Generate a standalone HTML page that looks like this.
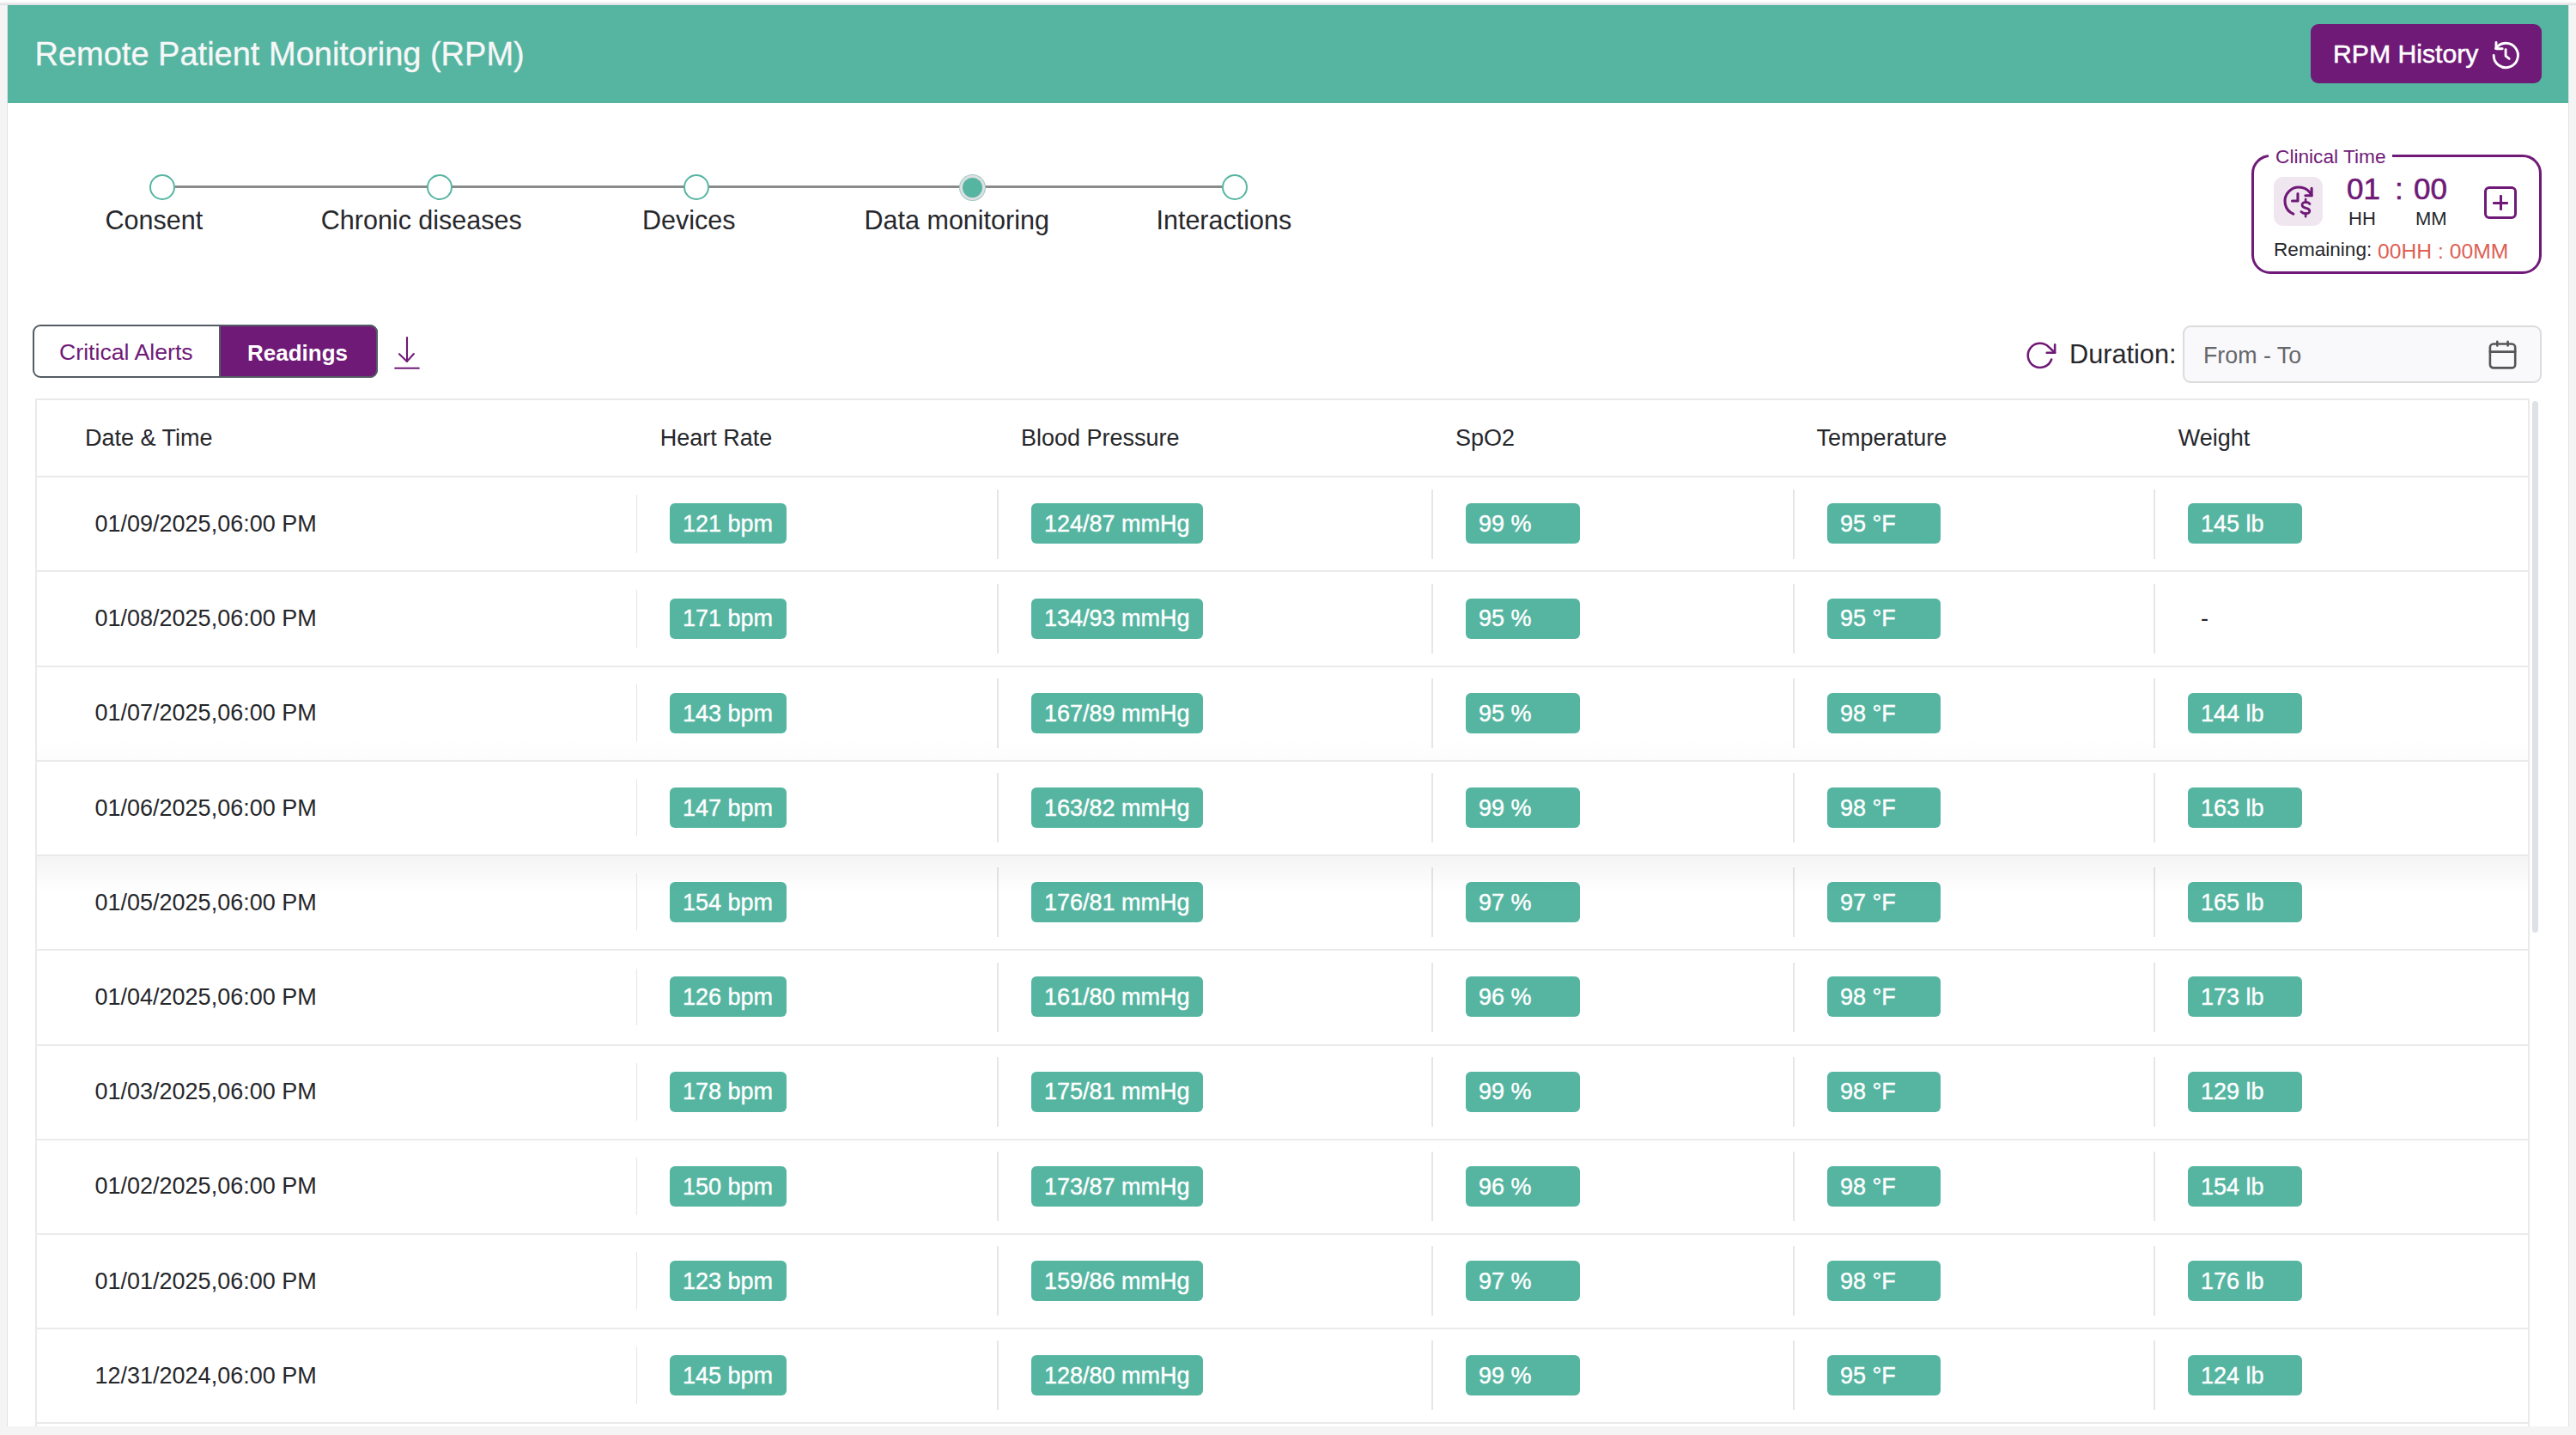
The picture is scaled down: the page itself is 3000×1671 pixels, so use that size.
<!DOCTYPE html><html><head><meta charset="utf-8"><style>
html,body{margin:0;padding:0;}
body{width:3000px;height:1671px;position:relative;overflow:hidden;background:#f4f4f4;font-family:"Liberation Sans",sans-serif;}
.t{position:absolute;white-space:pre;line-height:normal;}
.r{position:absolute;box-sizing:border-box;}
svg{position:absolute;overflow:visible;}
</style></head><body>
<div class="r" style="left:0px;top:0px;width:3000px;height:2px;background:#fff"></div>
<div class="r" style="left:0px;top:4px;width:3000px;height:2px;background:#e2e2e8"></div>
<div class="r" style="left:8px;top:6px;width:2984px;height:1655px;background:#dfe0e6"></div>
<div class="r" style="left:9px;top:6px;width:2982px;height:1655px;background:#fff"></div>
<div class="r" style="left:9px;top:6px;width:2982px;height:114px;background:#55b5a1"></div>
<div class="r" style="left:9px;top:6px;width:2982px;height:1px;background:#4bb39b"></div>
<div class="t" style="left:40.5px;top:41.8px;font-size:38px;color:#f7f7f8;font-weight:400;-webkit-text-stroke:0.3px #f7f7f8">Remote Patient Monitoring (RPM)</div>
<div class="r" style="left:2691px;top:28px;width:269px;height:69px;background:#6f1a77;border-radius:9px"></div>
<div class="t" style="left:2717.0px;top:45.7px;font-size:30.2px;color:#ffffff;font-weight:400;-webkit-text-stroke:0.5px #fff">RPM History</div>
<svg style="left:2895px;top:42px" width="50" height="46" viewBox="0 0 50 46" fill="none" stroke="#fff" stroke-width="2.9" stroke-linecap="round" stroke-linejoin="round"><path d="M9.15 22.45 A14.15 14.15 0 1 0 11.57 14.54"/><path d="M12 7.4 V14.8 H19.2"/><path d="M23.1 15.7 V23.1 L27.2 26.3"/></svg>
<div class="r" style="left:204px;top:216.2px;width:1219px;height:2.6px;background:#8a8a8a"></div>
<div class="r" style="left:174.0px;top:203px;width:30px;height:30px;border-radius:50%;background:#fff;border:2px solid #55b5a1;"></div>
<div class="r" style="left:496.7px;top:203px;width:30px;height:30px;border-radius:50%;background:#fff;border:2px solid #55b5a1;"></div>
<div class="r" style="left:796.0px;top:203px;width:30px;height:30px;border-radius:50%;background:#fff;border:2px solid #55b5a1;"></div>
<div class="r" style="left:1117px;top:203px;width:31px;height:31px;border-radius:50%;background:#dfdfe3;border:1px solid rgba(85,181,161,0.45)"></div>
<div class="r" style="left:1121px;top:207px;width:23px;height:23px;border-radius:50%;background:#55b5a1;"></div>
<div class="r" style="left:1423.0px;top:203px;width:30px;height:30px;border-radius:50%;background:#fff;border:2px solid #55b5a1;"></div>
<div class="t" style="left:122.5px;top:239.2px;font-size:30.5px;color:#26272b;font-weight:400;">Consent</div>
<div class="t" style="left:373.8px;top:239.2px;font-size:30.5px;color:#26272b;font-weight:400;">Chronic diseases</div>
<div class="t" style="left:748.0px;top:239.2px;font-size:30.5px;color:#26272b;font-weight:400;">Devices</div>
<div class="t" style="left:1006.6px;top:239.2px;font-size:30.5px;color:#26272b;font-weight:400;">Data monitoring</div>
<div class="t" style="left:1346.5px;top:239.2px;font-size:30.5px;color:#26272b;font-weight:400;">Interactions</div>
<div class="r" style="left:2622px;top:180px;width:338px;height:139px;border:3px solid #6f1a77;border-radius:22px"></div>
<div class="r" style="left:2642px;top:176px;width:144px;height:10px;background:#fff"></div>
<div class="t" style="left:2650.0px;top:169.3px;font-size:22.7px;color:#6f1a77;font-weight:400;">Clinical Time</div>
<div class="r" style="left:2648px;top:206px;width:57px;height:57px;background:#f0e6f0;border-radius:11px"></div>
<svg style="left:2645px;top:203px" width="65" height="65" viewBox="0 0 65 65" fill="none" stroke="#6f1a77" stroke-width="3.1" stroke-linecap="round" stroke-linejoin="round"><path d="M25.8 46.2 A16.25 16.25 0 1 1 47.1 24.7"/><path d="M47.1 16.3 V24.7 H39.9"/><path d="M31 22.6 V31 H24.5"/><path stroke-width="2.7" d="M45 34.6 C44 32.6 41.5 32.3 40 32.3 C37.2 32.4 35.8 34 36 36 C36.3 38.6 39.8 39.1 41.5 39.6 C44 40.3 45 41.6 44.8 43.2 C44.5 45.4 41.8 45.8 40 45.7 C38 45.6 36.1 44.8 34.9 43.5"/><path stroke-width="2.7" d="M40.1 29.2 V32.3 M40.1 45.7 V49.2"/></svg>
<div class="t" style="left:2733.0px;top:199.7px;font-size:35px;color:#6f1a77;font-weight:400;-webkit-text-stroke:0.6px #6f1a77">01</div>
<div class="t" style="left:2789.0px;top:199.7px;font-size:35px;color:#6f1a77;font-weight:400;-webkit-text-stroke:0.6px #6f1a77">:</div>
<div class="t" style="left:2811.0px;top:199.7px;font-size:35px;color:#6f1a77;font-weight:400;-webkit-text-stroke:0.6px #6f1a77">00</div>
<div class="t" style="left:2735.0px;top:241.8px;font-size:22px;color:#26272b;font-weight:400;">HH</div>
<div class="t" style="left:2813.0px;top:241.8px;font-size:22px;color:#26272b;font-weight:400;">MM</div>
<div class="r" style="left:2893px;top:217px;width:38px;height:38px;border:3px solid #6f1a77;border-radius:6px"></div>
<div class="r" style="left:2903px;top:234.5px;width:18px;height:3.0px;background:#6f1a77;border-radius:1px"></div>
<div class="r" style="left:2910.5px;top:227px;width:3.0px;height:18px;background:#6f1a77;border-radius:1px"></div>
<div class="t" style="left:2648.0px;top:277.5px;font-size:22.6px;color:#26272b;font-weight:400;">Remaining:</div>
<div class="t" style="left:2769.0px;top:278.6px;font-size:24.7px;color:#de5f55;font-weight:400;">00HH : 00MM</div>
<div class="r" style="left:38px;top:378px;width:402px;height:62px;border:2px solid #545b63;border-radius:9px;background:#fff"></div>
<div class="r" style="left:255px;top:378px;width:185px;height:62px;background:#6f1a77;border:2px solid #545b63;border-left-width:2px;border-radius:0 9px 9px 0"></div>
<div class="t" style="left:69.0px;top:395.4px;font-size:26.7px;color:#6f1a77;font-weight:400;">Critical Alerts</div>
<div class="t" style="left:288.0px;top:396.1px;font-size:26px;color:#ffffff;font-weight:700;">Readings</div>
<svg style="left:459px;top:392px" width="31" height="40" viewBox="0 0 31 40" fill="none" stroke="#6f1a77" stroke-width="2.1" stroke-linecap="round" stroke-linejoin="round"><path d="M15 1 V28.5"/><path d="M6 20.2 L15 28.9 L22.9 20"/><path d="M1.2 36.8 H28.8"/></svg>
<svg style="left:2357.3px;top:395.1px" width="37.7" height="37.7" viewBox="0 0 24 24" fill="none" stroke="#6f1a77" stroke-width="1.65" stroke-linecap="round" stroke-linejoin="round"><path d="M23 4v6h-6"/><path d="M20.49 15a9 9 0 1 1-2.12-9.36L23 10"/></svg>
<div class="t" style="left:2410.0px;top:395.0px;font-size:30.7px;color:#26272b;font-weight:400;">Duration:</div>
<div class="r" style="left:2542px;top:379px;width:418px;height:67px;border:2px solid #dcdcdc;border-radius:9px;background:#f9f9fb"></div>
<div class="t" style="left:2566.0px;top:398.5px;font-size:26.8px;color:#66676b;font-weight:400;">From - To</div>
<svg style="left:2898px;top:395px" width="35" height="36" viewBox="0 0 35 36" fill="none" stroke="#555" stroke-width="2.6" stroke-linecap="round" stroke-linejoin="round"><rect x="1.9" y="5.5" width="29.3" height="27.9" rx="4"/><path d="M1.9 14.6 H31.2"/><path d="M10.3 2.7 V7.4 M22.6 2.7 V7.4"/></svg>
<div class="r" style="left:41px;top:464px;width:2905px;height:1197px;border-left:2px solid #eaeaea;border-right:2px solid #eaeaea;border-top:2px solid #eaeaea"></div>
<div class="t" style="left:99.0px;top:495.2px;font-size:27px;color:#26272b;font-weight:400;">Date &amp; Time</div>
<div class="t" style="left:768.8px;top:495.2px;font-size:27px;color:#26272b;font-weight:400;">Heart Rate</div>
<div class="t" style="left:1188.9px;top:495.2px;font-size:27px;color:#26272b;font-weight:400;">Blood Pressure</div>
<div class="t" style="left:1695.0px;top:495.2px;font-size:27px;color:#26272b;font-weight:400;">SpO2</div>
<div class="t" style="left:2115.6px;top:495.2px;font-size:27px;color:#26272b;font-weight:400;">Temperature</div>
<div class="t" style="left:2536.7px;top:495.2px;font-size:27px;color:#26272b;font-weight:400;">Weight</div>
<div class="r" style="left:41px;top:554px;width:2903px;height:2px;background:#eaeaea"></div>
<div class="r" style="left:41px;top:664px;width:2903px;height:2px;background:#eaeaea"></div>
<div class="t" style="left:110.5px;top:595.0px;font-size:27px;color:#26272b;font-weight:400;">01/09/2025,06:00 PM</div>
<div class="r" style="left:741px;top:576px;width:1px;height:68px;background:#e6e6e6"></div>
<div class="r" style="left:1161px;top:570px;width:2px;height:81px;background:#e6e6e6"></div>
<div class="r" style="left:1667px;top:570px;width:2px;height:81px;background:#e6e6e6"></div>
<div class="r" style="left:2088px;top:570px;width:2px;height:81px;background:#e6e6e6"></div>
<div class="r" style="left:2508px;top:570px;width:2px;height:81px;background:#e6e6e6"></div>
<div class="r" style="left:780px;top:586px;width:136px;height:47px;background:#55b5a1;border-radius:6px"></div>
<div class="t" style="left:795.0px;top:595.1px;font-size:27px;color:#fff;font-weight:400;-webkit-text-stroke:0.4px #fff">121 bpm</div>
<div class="r" style="left:1201px;top:586px;width:200px;height:47px;background:#55b5a1;border-radius:6px"></div>
<div class="t" style="left:1216.0px;top:595.1px;font-size:27px;color:#fff;font-weight:400;-webkit-text-stroke:0.4px #fff">124/87 mmHg</div>
<div class="r" style="left:1707px;top:586px;width:133px;height:47px;background:#55b5a1;border-radius:6px"></div>
<div class="t" style="left:1722.0px;top:595.1px;font-size:27px;color:#fff;font-weight:400;-webkit-text-stroke:0.4px #fff">99 %</div>
<div class="r" style="left:2128px;top:586px;width:132px;height:47px;background:#55b5a1;border-radius:6px"></div>
<div class="t" style="left:2143.0px;top:595.1px;font-size:27px;color:#fff;font-weight:400;-webkit-text-stroke:0.4px #fff">95 °F</div>
<div class="r" style="left:2548px;top:586px;width:133px;height:47px;background:#55b5a1;border-radius:6px"></div>
<div class="t" style="left:2563.0px;top:595.1px;font-size:27px;color:#fff;font-weight:400;-webkit-text-stroke:0.4px #fff">145 lb</div>
<div class="r" style="left:41px;top:775px;width:2903px;height:2px;background:#eaeaea"></div>
<div class="t" style="left:110.5px;top:705.2px;font-size:27px;color:#26272b;font-weight:400;">01/08/2025,06:00 PM</div>
<div class="r" style="left:741px;top:687px;width:1px;height:67px;background:#e6e6e6"></div>
<div class="r" style="left:1161px;top:680px;width:2px;height:81px;background:#e6e6e6"></div>
<div class="r" style="left:1667px;top:680px;width:2px;height:81px;background:#e6e6e6"></div>
<div class="r" style="left:2088px;top:680px;width:2px;height:81px;background:#e6e6e6"></div>
<div class="r" style="left:2508px;top:680px;width:2px;height:81px;background:#e6e6e6"></div>
<div class="r" style="left:780px;top:697px;width:136px;height:47px;background:#55b5a1;border-radius:6px"></div>
<div class="t" style="left:795.0px;top:705.3px;font-size:27px;color:#fff;font-weight:400;-webkit-text-stroke:0.4px #fff">171 bpm</div>
<div class="r" style="left:1201px;top:697px;width:200px;height:47px;background:#55b5a1;border-radius:6px"></div>
<div class="t" style="left:1216.0px;top:705.3px;font-size:27px;color:#fff;font-weight:400;-webkit-text-stroke:0.4px #fff">134/93 mmHg</div>
<div class="r" style="left:1707px;top:697px;width:133px;height:47px;background:#55b5a1;border-radius:6px"></div>
<div class="t" style="left:1722.0px;top:705.3px;font-size:27px;color:#fff;font-weight:400;-webkit-text-stroke:0.4px #fff">95 %</div>
<div class="r" style="left:2128px;top:697px;width:132px;height:47px;background:#55b5a1;border-radius:6px"></div>
<div class="t" style="left:2143.0px;top:705.3px;font-size:27px;color:#fff;font-weight:400;-webkit-text-stroke:0.4px #fff">95 °F</div>
<div class="t" style="left:2563.0px;top:705.3px;font-size:27px;color:#26272b;font-weight:400;">-</div>
<div class="r" style="left:41px;top:885px;width:2903px;height:2px;background:#eaeaea"></div>
<div class="t" style="left:110.5px;top:815.4px;font-size:27px;color:#26272b;font-weight:400;">01/07/2025,06:00 PM</div>
<div class="r" style="left:741px;top:797px;width:1px;height:67px;background:#e6e6e6"></div>
<div class="r" style="left:1161px;top:790px;width:2px;height:81px;background:#e6e6e6"></div>
<div class="r" style="left:1667px;top:790px;width:2px;height:81px;background:#e6e6e6"></div>
<div class="r" style="left:2088px;top:790px;width:2px;height:81px;background:#e6e6e6"></div>
<div class="r" style="left:2508px;top:790px;width:2px;height:81px;background:#e6e6e6"></div>
<div class="r" style="left:780px;top:807px;width:136px;height:47px;background:#55b5a1;border-radius:6px"></div>
<div class="t" style="left:795.0px;top:815.5px;font-size:27px;color:#fff;font-weight:400;-webkit-text-stroke:0.4px #fff">143 bpm</div>
<div class="r" style="left:1201px;top:807px;width:200px;height:47px;background:#55b5a1;border-radius:6px"></div>
<div class="t" style="left:1216.0px;top:815.5px;font-size:27px;color:#fff;font-weight:400;-webkit-text-stroke:0.4px #fff">167/89 mmHg</div>
<div class="r" style="left:1707px;top:807px;width:133px;height:47px;background:#55b5a1;border-radius:6px"></div>
<div class="t" style="left:1722.0px;top:815.5px;font-size:27px;color:#fff;font-weight:400;-webkit-text-stroke:0.4px #fff">95 %</div>
<div class="r" style="left:2128px;top:807px;width:132px;height:47px;background:#55b5a1;border-radius:6px"></div>
<div class="t" style="left:2143.0px;top:815.5px;font-size:27px;color:#fff;font-weight:400;-webkit-text-stroke:0.4px #fff">98 °F</div>
<div class="r" style="left:2548px;top:807px;width:133px;height:47px;background:#55b5a1;border-radius:6px"></div>
<div class="t" style="left:2563.0px;top:815.5px;font-size:27px;color:#fff;font-weight:400;-webkit-text-stroke:0.4px #fff">144 lb</div>
<div class="r" style="left:41px;top:995px;width:2903px;height:2px;background:#eaeaea"></div>
<div class="t" style="left:110.5px;top:925.6px;font-size:27px;color:#26272b;font-weight:400;">01/06/2025,06:00 PM</div>
<div class="r" style="left:741px;top:907px;width:1px;height:67px;background:#e6e6e6"></div>
<div class="r" style="left:1161px;top:900px;width:2px;height:81px;background:#e6e6e6"></div>
<div class="r" style="left:1667px;top:900px;width:2px;height:81px;background:#e6e6e6"></div>
<div class="r" style="left:2088px;top:900px;width:2px;height:81px;background:#e6e6e6"></div>
<div class="r" style="left:2508px;top:900px;width:2px;height:81px;background:#e6e6e6"></div>
<div class="r" style="left:780px;top:917px;width:136px;height:47px;background:#55b5a1;border-radius:6px"></div>
<div class="t" style="left:795.0px;top:925.7px;font-size:27px;color:#fff;font-weight:400;-webkit-text-stroke:0.4px #fff">147 bpm</div>
<div class="r" style="left:1201px;top:917px;width:200px;height:47px;background:#55b5a1;border-radius:6px"></div>
<div class="t" style="left:1216.0px;top:925.7px;font-size:27px;color:#fff;font-weight:400;-webkit-text-stroke:0.4px #fff">163/82 mmHg</div>
<div class="r" style="left:1707px;top:917px;width:133px;height:47px;background:#55b5a1;border-radius:6px"></div>
<div class="t" style="left:1722.0px;top:925.7px;font-size:27px;color:#fff;font-weight:400;-webkit-text-stroke:0.4px #fff">99 %</div>
<div class="r" style="left:2128px;top:917px;width:132px;height:47px;background:#55b5a1;border-radius:6px"></div>
<div class="t" style="left:2143.0px;top:925.7px;font-size:27px;color:#fff;font-weight:400;-webkit-text-stroke:0.4px #fff">98 °F</div>
<div class="r" style="left:2548px;top:917px;width:133px;height:47px;background:#55b5a1;border-radius:6px"></div>
<div class="t" style="left:2563.0px;top:925.7px;font-size:27px;color:#fff;font-weight:400;-webkit-text-stroke:0.4px #fff">163 lb</div>
<div class="r" style="left:41px;top:1105px;width:2903px;height:2px;background:#eaeaea"></div>
<div class="t" style="left:110.5px;top:1035.8px;font-size:27px;color:#26272b;font-weight:400;">01/05/2025,06:00 PM</div>
<div class="r" style="left:741px;top:1017px;width:1px;height:67px;background:#e6e6e6"></div>
<div class="r" style="left:1161px;top:1010px;width:2px;height:81px;background:#e6e6e6"></div>
<div class="r" style="left:1667px;top:1010px;width:2px;height:81px;background:#e6e6e6"></div>
<div class="r" style="left:2088px;top:1010px;width:2px;height:81px;background:#e6e6e6"></div>
<div class="r" style="left:2508px;top:1010px;width:2px;height:81px;background:#e6e6e6"></div>
<div class="r" style="left:780px;top:1027px;width:136px;height:47px;background:#55b5a1;border-radius:6px"></div>
<div class="t" style="left:795.0px;top:1035.9px;font-size:27px;color:#fff;font-weight:400;-webkit-text-stroke:0.4px #fff">154 bpm</div>
<div class="r" style="left:1201px;top:1027px;width:200px;height:47px;background:#55b5a1;border-radius:6px"></div>
<div class="t" style="left:1216.0px;top:1035.9px;font-size:27px;color:#fff;font-weight:400;-webkit-text-stroke:0.4px #fff">176/81 mmHg</div>
<div class="r" style="left:1707px;top:1027px;width:133px;height:47px;background:#55b5a1;border-radius:6px"></div>
<div class="t" style="left:1722.0px;top:1035.9px;font-size:27px;color:#fff;font-weight:400;-webkit-text-stroke:0.4px #fff">97 %</div>
<div class="r" style="left:2128px;top:1027px;width:132px;height:47px;background:#55b5a1;border-radius:6px"></div>
<div class="t" style="left:2143.0px;top:1035.9px;font-size:27px;color:#fff;font-weight:400;-webkit-text-stroke:0.4px #fff">97 °F</div>
<div class="r" style="left:2548px;top:1027px;width:133px;height:47px;background:#55b5a1;border-radius:6px"></div>
<div class="t" style="left:2563.0px;top:1035.9px;font-size:27px;color:#fff;font-weight:400;-webkit-text-stroke:0.4px #fff">165 lb</div>
<div class="r" style="left:41px;top:1216px;width:2903px;height:2px;background:#eaeaea"></div>
<div class="t" style="left:110.5px;top:1146.0px;font-size:27px;color:#26272b;font-weight:400;">01/04/2025,06:00 PM</div>
<div class="r" style="left:741px;top:1128px;width:1px;height:66px;background:#e6e6e6"></div>
<div class="r" style="left:1161px;top:1121px;width:2px;height:81px;background:#e6e6e6"></div>
<div class="r" style="left:1667px;top:1121px;width:2px;height:81px;background:#e6e6e6"></div>
<div class="r" style="left:2088px;top:1121px;width:2px;height:81px;background:#e6e6e6"></div>
<div class="r" style="left:2508px;top:1121px;width:2px;height:81px;background:#e6e6e6"></div>
<div class="r" style="left:780px;top:1137px;width:136px;height:47px;background:#55b5a1;border-radius:6px"></div>
<div class="t" style="left:795.0px;top:1146.1px;font-size:27px;color:#fff;font-weight:400;-webkit-text-stroke:0.4px #fff">126 bpm</div>
<div class="r" style="left:1201px;top:1137px;width:200px;height:47px;background:#55b5a1;border-radius:6px"></div>
<div class="t" style="left:1216.0px;top:1146.1px;font-size:27px;color:#fff;font-weight:400;-webkit-text-stroke:0.4px #fff">161/80 mmHg</div>
<div class="r" style="left:1707px;top:1137px;width:133px;height:47px;background:#55b5a1;border-radius:6px"></div>
<div class="t" style="left:1722.0px;top:1146.1px;font-size:27px;color:#fff;font-weight:400;-webkit-text-stroke:0.4px #fff">96 %</div>
<div class="r" style="left:2128px;top:1137px;width:132px;height:47px;background:#55b5a1;border-radius:6px"></div>
<div class="t" style="left:2143.0px;top:1146.1px;font-size:27px;color:#fff;font-weight:400;-webkit-text-stroke:0.4px #fff">98 °F</div>
<div class="r" style="left:2548px;top:1137px;width:133px;height:47px;background:#55b5a1;border-radius:6px"></div>
<div class="t" style="left:2563.0px;top:1146.1px;font-size:27px;color:#fff;font-weight:400;-webkit-text-stroke:0.4px #fff">173 lb</div>
<div class="r" style="left:41px;top:1326px;width:2903px;height:2px;background:#eaeaea"></div>
<div class="t" style="left:110.5px;top:1256.2px;font-size:27px;color:#26272b;font-weight:400;">01/03/2025,06:00 PM</div>
<div class="r" style="left:741px;top:1238px;width:1px;height:67px;background:#e6e6e6"></div>
<div class="r" style="left:1161px;top:1231px;width:2px;height:81px;background:#e6e6e6"></div>
<div class="r" style="left:1667px;top:1231px;width:2px;height:81px;background:#e6e6e6"></div>
<div class="r" style="left:2088px;top:1231px;width:2px;height:81px;background:#e6e6e6"></div>
<div class="r" style="left:2508px;top:1231px;width:2px;height:81px;background:#e6e6e6"></div>
<div class="r" style="left:780px;top:1248px;width:136px;height:47px;background:#55b5a1;border-radius:6px"></div>
<div class="t" style="left:795.0px;top:1256.3px;font-size:27px;color:#fff;font-weight:400;-webkit-text-stroke:0.4px #fff">178 bpm</div>
<div class="r" style="left:1201px;top:1248px;width:200px;height:47px;background:#55b5a1;border-radius:6px"></div>
<div class="t" style="left:1216.0px;top:1256.3px;font-size:27px;color:#fff;font-weight:400;-webkit-text-stroke:0.4px #fff">175/81 mmHg</div>
<div class="r" style="left:1707px;top:1248px;width:133px;height:47px;background:#55b5a1;border-radius:6px"></div>
<div class="t" style="left:1722.0px;top:1256.3px;font-size:27px;color:#fff;font-weight:400;-webkit-text-stroke:0.4px #fff">99 %</div>
<div class="r" style="left:2128px;top:1248px;width:132px;height:47px;background:#55b5a1;border-radius:6px"></div>
<div class="t" style="left:2143.0px;top:1256.3px;font-size:27px;color:#fff;font-weight:400;-webkit-text-stroke:0.4px #fff">98 °F</div>
<div class="r" style="left:2548px;top:1248px;width:133px;height:47px;background:#55b5a1;border-radius:6px"></div>
<div class="t" style="left:2563.0px;top:1256.3px;font-size:27px;color:#fff;font-weight:400;-webkit-text-stroke:0.4px #fff">129 lb</div>
<div class="r" style="left:41px;top:1436px;width:2903px;height:2px;background:#eaeaea"></div>
<div class="t" style="left:110.5px;top:1366.4px;font-size:27px;color:#26272b;font-weight:400;">01/02/2025,06:00 PM</div>
<div class="r" style="left:741px;top:1348px;width:1px;height:67px;background:#e6e6e6"></div>
<div class="r" style="left:1161px;top:1341px;width:2px;height:81px;background:#e6e6e6"></div>
<div class="r" style="left:1667px;top:1341px;width:2px;height:81px;background:#e6e6e6"></div>
<div class="r" style="left:2088px;top:1341px;width:2px;height:81px;background:#e6e6e6"></div>
<div class="r" style="left:2508px;top:1341px;width:2px;height:81px;background:#e6e6e6"></div>
<div class="r" style="left:780px;top:1358px;width:136px;height:47px;background:#55b5a1;border-radius:6px"></div>
<div class="t" style="left:795.0px;top:1366.5px;font-size:27px;color:#fff;font-weight:400;-webkit-text-stroke:0.4px #fff">150 bpm</div>
<div class="r" style="left:1201px;top:1358px;width:200px;height:47px;background:#55b5a1;border-radius:6px"></div>
<div class="t" style="left:1216.0px;top:1366.5px;font-size:27px;color:#fff;font-weight:400;-webkit-text-stroke:0.4px #fff">173/87 mmHg</div>
<div class="r" style="left:1707px;top:1358px;width:133px;height:47px;background:#55b5a1;border-radius:6px"></div>
<div class="t" style="left:1722.0px;top:1366.5px;font-size:27px;color:#fff;font-weight:400;-webkit-text-stroke:0.4px #fff">96 %</div>
<div class="r" style="left:2128px;top:1358px;width:132px;height:47px;background:#55b5a1;border-radius:6px"></div>
<div class="t" style="left:2143.0px;top:1366.5px;font-size:27px;color:#fff;font-weight:400;-webkit-text-stroke:0.4px #fff">98 °F</div>
<div class="r" style="left:2548px;top:1358px;width:133px;height:47px;background:#55b5a1;border-radius:6px"></div>
<div class="t" style="left:2563.0px;top:1366.5px;font-size:27px;color:#fff;font-weight:400;-webkit-text-stroke:0.4px #fff">154 lb</div>
<div class="r" style="left:41px;top:1546px;width:2903px;height:2px;background:#eaeaea"></div>
<div class="t" style="left:110.5px;top:1476.6px;font-size:27px;color:#26272b;font-weight:400;">01/01/2025,06:00 PM</div>
<div class="r" style="left:741px;top:1458px;width:1px;height:67px;background:#e6e6e6"></div>
<div class="r" style="left:1161px;top:1451px;width:2px;height:81px;background:#e6e6e6"></div>
<div class="r" style="left:1667px;top:1451px;width:2px;height:81px;background:#e6e6e6"></div>
<div class="r" style="left:2088px;top:1451px;width:2px;height:81px;background:#e6e6e6"></div>
<div class="r" style="left:2508px;top:1451px;width:2px;height:81px;background:#e6e6e6"></div>
<div class="r" style="left:780px;top:1468px;width:136px;height:47px;background:#55b5a1;border-radius:6px"></div>
<div class="t" style="left:795.0px;top:1476.7px;font-size:27px;color:#fff;font-weight:400;-webkit-text-stroke:0.4px #fff">123 bpm</div>
<div class="r" style="left:1201px;top:1468px;width:200px;height:47px;background:#55b5a1;border-radius:6px"></div>
<div class="t" style="left:1216.0px;top:1476.7px;font-size:27px;color:#fff;font-weight:400;-webkit-text-stroke:0.4px #fff">159/86 mmHg</div>
<div class="r" style="left:1707px;top:1468px;width:133px;height:47px;background:#55b5a1;border-radius:6px"></div>
<div class="t" style="left:1722.0px;top:1476.7px;font-size:27px;color:#fff;font-weight:400;-webkit-text-stroke:0.4px #fff">97 %</div>
<div class="r" style="left:2128px;top:1468px;width:132px;height:47px;background:#55b5a1;border-radius:6px"></div>
<div class="t" style="left:2143.0px;top:1476.7px;font-size:27px;color:#fff;font-weight:400;-webkit-text-stroke:0.4px #fff">98 °F</div>
<div class="r" style="left:2548px;top:1468px;width:133px;height:47px;background:#55b5a1;border-radius:6px"></div>
<div class="t" style="left:2563.0px;top:1476.7px;font-size:27px;color:#fff;font-weight:400;-webkit-text-stroke:0.4px #fff">176 lb</div>
<div class="r" style="left:41px;top:1656px;width:2903px;height:2px;background:#eaeaea"></div>
<div class="t" style="left:110.5px;top:1586.8px;font-size:27px;color:#26272b;font-weight:400;">12/31/2024,06:00 PM</div>
<div class="r" style="left:741px;top:1568px;width:1px;height:67px;background:#e6e6e6"></div>
<div class="r" style="left:1161px;top:1561px;width:2px;height:81px;background:#e6e6e6"></div>
<div class="r" style="left:1667px;top:1561px;width:2px;height:81px;background:#e6e6e6"></div>
<div class="r" style="left:2088px;top:1561px;width:2px;height:81px;background:#e6e6e6"></div>
<div class="r" style="left:2508px;top:1561px;width:2px;height:81px;background:#e6e6e6"></div>
<div class="r" style="left:780px;top:1578px;width:136px;height:47px;background:#55b5a1;border-radius:6px"></div>
<div class="t" style="left:795.0px;top:1586.9px;font-size:27px;color:#fff;font-weight:400;-webkit-text-stroke:0.4px #fff">145 bpm</div>
<div class="r" style="left:1201px;top:1578px;width:200px;height:47px;background:#55b5a1;border-radius:6px"></div>
<div class="t" style="left:1216.0px;top:1586.9px;font-size:27px;color:#fff;font-weight:400;-webkit-text-stroke:0.4px #fff">128/80 mmHg</div>
<div class="r" style="left:1707px;top:1578px;width:133px;height:47px;background:#55b5a1;border-radius:6px"></div>
<div class="t" style="left:1722.0px;top:1586.9px;font-size:27px;color:#fff;font-weight:400;-webkit-text-stroke:0.4px #fff">99 %</div>
<div class="r" style="left:2128px;top:1578px;width:132px;height:47px;background:#55b5a1;border-radius:6px"></div>
<div class="t" style="left:2143.0px;top:1586.9px;font-size:27px;color:#fff;font-weight:400;-webkit-text-stroke:0.4px #fff">95 °F</div>
<div class="r" style="left:2548px;top:1578px;width:133px;height:47px;background:#55b5a1;border-radius:6px"></div>
<div class="t" style="left:2563.0px;top:1586.9px;font-size:27px;color:#fff;font-weight:400;-webkit-text-stroke:0.4px #fff">124 lb</div>
<div class="r" style="left:43px;top:997px;width:2901px;height:43px;background:linear-gradient(rgba(0,0,0,0.045),rgba(0,0,0,0))"></div>
<div class="r" style="left:43px;top:860px;width:2901px;height:25px;background:linear-gradient(rgba(0,0,0,0),rgba(0,0,0,0.012))"></div>
<div class="r" style="left:2949px;top:467px;width:7px;height:619px;background:#dee1e5;border-radius:4px"></div>
</body></html>
